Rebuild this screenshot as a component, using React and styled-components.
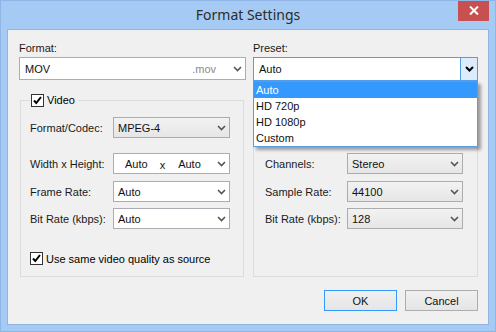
import React from 'react';
import styled, {createGlobalStyle} from 'styled-components';

const Global = createGlobalStyle`
    html, body {
        margin: 0;
        padding: 0;
        background: #a5cbf5;
    }
    body {
        font-family: "Liberation Sans", Arial, sans-serif;
        font-size: 11px;
        color: #000;
    }
`;

const Window = styled.div`
    width: 496px;
    height: 332px;
    box-sizing: border-box;
    background: #a5cbf5;
    border: 1px solid #8fb6e6;
    display: flex;
    flex-direction: column;
    position: relative;
    overflow: hidden;
`;

const TitleBar = styled.div`
    height: 28px;
    display: flex;
    align-items: center;
    justify-content: center;
    position: relative;
`;

const Title = styled.div`
    font-family: "Noto Sans", "Open Sans", sans-serif;
    font-size: 14px;
    color: #2b2b2b;
    margin-top: -1px;
`;

const CloseButton = styled.div`
    position: absolute;
    top: -1px;
    right: 6px;
    width: 31px;
    height: 21px;
    background: #c75050;
    display: flex;
    align-items: center;
    justify-content: center;
`;

const Client = styled.div`
    margin: 0 6px 6px 6px;
    border: 1px solid #92b5df;
    background: #f0f0f0;
    flex: 1;
    padding: 12px 9px 0 11px;
    display: flex;
    flex-direction: column;
    position: relative;
`;

const TopRow = styled.div`
    display: grid;
    grid-template-columns: 227px 225px;
    column-gap: 7px;
`;

const Field = styled.div`
    display: flex;
    flex-direction: column;
    position: relative;
`;

const Label = styled.div`
    height: 13px;
    line-height: 13px;
    margin-bottom: 2px;
    color: #1a1a1a;
`;

const Combo = styled.div`
    box-sizing: border-box;
    height: ${p => p.h || 21}px;
    width: ${p => (p.w ? p.w + 'px' : 'auto')};
    border: 1px solid ${p => (p.active ? '#569de5' : p.flat ? '#acacac' : '#abadb3')};
    background: ${p => (p.flat ? 'linear-gradient(#f2f2f2, #e6e6e6)' : '#fff')};
    display: flex;
    align-items: center;
    padding-left: ${p => p.pad || 4}px;
    position: relative;
    color: #111;
    white-space: nowrap;
`;

const ComboText = styled.span`
    flex: 1;
    white-space: nowrap;
`;

const Ext = styled.span`
    color: #8a8a8a;
    margin-right: 12px;
`;

const ArrowBox = styled.div`
    width: 16px;
    align-self: stretch;
    display: flex;
    align-items: center;
    justify-content: center;
    background: ${p => (p.active ? '#dcecfc' : 'transparent')};
    border-left: 1px solid ${p => (p.active ? '#569de5' : 'transparent')};
`;

const Chevron = ({dark}) => (
    <svg width="9" height="6" viewBox="0 0 9 6">
        <path d="M1 1 L4.5 4.5 L8 1" fill="none" stroke={dark ? '#000' : '#555'} strokeWidth={dark ? 2 : 1.6}/>
    </svg>
);

const DropList = styled.div`
    position: absolute;
    left: 0;
    top: 39px;
    width: 225px;
    box-sizing: border-box;
    border: 1px solid #569de5;
    background: #fff;
    box-shadow: 3px 3px 3px rgba(0, 0, 0, 0.35);
    z-index: 5;
`;

const DropItem = styled.div`
    height: 16px;
    line-height: 16px;
    padding-left: 2px;
    background: ${p => (p.sel ? '#3399ff' : '#fff')};
    color: ${p => (p.sel ? '#fff' : '#111')};
`;

const Groups = styled.div`
    display: grid;
    grid-template-columns: 224px 225px;
    column-gap: 9px;
    margin-top: 12px;
    padding-left: 1px;
`;

const Group = styled.fieldset`
    margin: 0;
    padding: 0 0 0 ${p => p.indent}px;
    border: 1px solid #dcdcdc;
    height: 184px;
    box-sizing: border-box;
    min-width: 0;
`;

const Legend = styled.legend`
    margin-left: 0;
    padding: 0 3px 0 1px;
    display: flex;
    align-items: center;
    height: 14px;
`;

const Box = styled.span`
    width: 13px;
    height: 13px;
    box-sizing: border-box;
    border: 1px solid #333;
    background: #fff;
    display: inline-flex;
    align-items: center;
    justify-content: center;
    margin-right: 3px;
`;

const Check = () => (
    <Box>
        <svg width="11" height="11" viewBox="0 0 11 11">
            <path d="M2 5.5 L4.3 8 L9 2" fill="none" stroke="#000" strokeWidth="2"/>
        </svg>
    </Box>
);

const Row = styled.div`
    display: flex;
    align-items: center;
    margin-top: ${p => p.top}px;
`;

const RowLabel = styled.div`
    width: ${p => p.w}px;
    color: #1a1a1a;
    white-space: nowrap;
`;

const CheckRow = styled.label`
    display: flex;
    align-items: center;
    margin-top: 23px;
`;

const Sep = styled.span`
    margin: 3px 13px 0 12px;
`;

const Buttons = styled.div`
    display: flex;
    justify-content: flex-end;
    gap: 8px;
    margin-top: 13px;
    padding-right: 1px;
`;

const Button = styled.div`
    width: 73px;
    height: 21px;
    box-sizing: border-box;
    border: 1px solid ${p => (p.primary ? '#3399ff' : '#adadad')};
    background: linear-gradient(#f0f0f0, #e5e5e5);
    display: flex;
    align-items: center;
    justify-content: center;
    color: #111;
`;

const videoRows = [
    {label: 'Frame Rate:', value: 'Auto', top: 7},
    {label: 'Bit Rate (kbps):', value: 'Auto', top: 6},
];

// the first audio row sits under the open preset list, so it is not drawn
const audioRows = [
    {label: 'Channels:', value: 'Stereo', top: 46},
    {label: 'Sample Rate:', value: '44100', top: 7},
    {label: 'Bit Rate (kbps):', value: '128', top: 6},
];

const presets = ['Auto', 'HD 720p', 'HD 1080p', 'Custom'];

export default function App() {
    return (
        <>
            <Global/>
            <Window>
                <TitleBar>
                    <Title>Format Settings</Title>
                    <CloseButton>
                        <svg width="10" height="9" viewBox="0 0 10 9">
                            <path d="M1 0.5 L9 8.5 M9 0.5 L1 8.5" stroke="#fff" strokeWidth="2"/>
                        </svg>
                    </CloseButton>
                </TitleBar>
                <Client>
                    <TopRow>
                        <Field>
                            <Label>Format:</Label>
                            <Combo h={23} pad={5}>
                                <ComboText>MOV</ComboText>
                                <Ext>.mov</Ext>
                                <ArrowBox><Chevron/></ArrowBox>
                            </Combo>
                        </Field>
                        <Field>
                            <Label>Preset:</Label>
                            <Combo h={24} pad={5} active>
                                <ComboText>Auto</ComboText>
                                <ArrowBox active><Chevron dark/></ArrowBox>
                            </Combo>
                            <DropList>
                                {presets.map((p, i) => (
                                    <DropItem key={p} sel={i === 0}>{p}</DropItem>
                                ))}
                            </DropList>
                        </Field>
                    </TopRow>
                    <Groups>
                        <Group indent={9}>
                            <Legend><Check/>Video</Legend>
                            <Row top={10}>
                                <RowLabel w={83}>Format/Codec:</RowLabel>
                                <Combo w={117} flat>
                                    <ComboText>MPEG-4</ComboText>
                                    <ArrowBox><Chevron/></ArrowBox>
                                </Combo>
                            </Row>
                            <Row top={15}>
                                <RowLabel w={83}>Width x Height:</RowLabel>
                                <Combo w={117} pad={11}>
                                    <span>Auto</span>
                                    <Sep>x</Sep>
                                    <ComboText>Auto</ComboText>
                                    <ArrowBox><Chevron/></ArrowBox>
                                </Combo>
                            </Row>
                            {videoRows.map(r => (
                                <Row key={r.label} top={r.top}>
                                    <RowLabel w={83}>{r.label}</RowLabel>
                                    <Combo w={117}>
                                        <ComboText>{r.value}</ComboText>
                                        <ArrowBox><Chevron/></ArrowBox>
                                    </Combo>
                                </Row>
                            ))}
                            <CheckRow><Check/>Use same video quality as source</CheckRow>
                        </Group>
                        <Group indent={11}>
                            <Legend aria-label="Audio"><Check/></Legend>
                            {audioRows.map(r => (
                                <Row key={r.label} top={r.top}>
                                    <RowLabel w={82}>{r.label}</RowLabel>
                                    <Combo w={116} flat>
                                        <ComboText>{r.value}</ComboText>
                                        <ArrowBox><Chevron/></ArrowBox>
                                    </Combo>
                                </Row>
                            ))}
                        </Group>
                    </Groups>
                    <Buttons>
                        <Button primary>OK</Button>
                        <Button>Cancel</Button>
                    </Buttons>
                </Client>
            </Window>
        </>
    );
}
